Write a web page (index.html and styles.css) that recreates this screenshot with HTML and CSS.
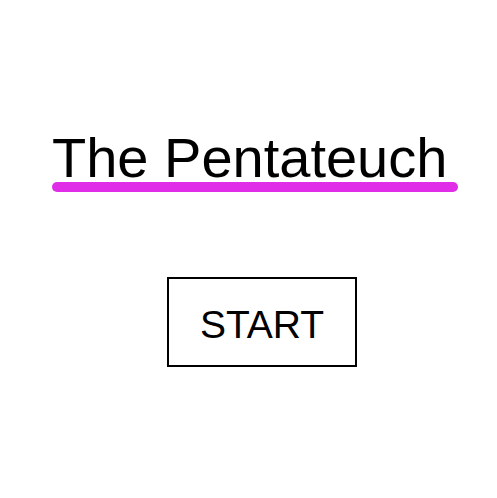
FILE: index.html
```html
<!DOCTYPE html>
<html>
<head>
<meta charset="utf-8">
<link rel="stylesheet" href="styles.css">
</head>
<body>
<main class="page">
  <div class="title-wrap">
    <h1 class="title">The Pentateuch</h1>
    <div class="bar"></div>
  </div>
  <button class="start">START</button>
</main>
</body>
</html>
```
FILE: styles.css
```css
html, body {
  margin: 0;
  padding: 0;
  background: #fff;
}
.page {
  width: 497px;
  height: 498px;
  display: flex;
  flex-direction: column;
  align-items: flex-start;
  font-family: "Liberation Sans", Arial, sans-serif;
}
.title-wrap {
  margin-top: 130px;
  margin-left: 52px;
  width: 406px;
  display: flex;
  flex-direction: column;
}
.title {
  margin: 0;
  font-weight: normal;
  font-size: 56px;
  line-height: 56px;
  color: #000;
}
.bar {
  margin-top: -4px;
  height: 10px;
  border-radius: 5px;
  background: #e02ee8;
}
.start {
  margin-top: 85px;
  margin-left: 167px;
  width: 190px;
  height: 90px;
  border: 2px solid #000;
  background: #fff;
  font-family: "Liberation Sans", Arial, sans-serif;
  font-size: 39px;
  color: #000;
  padding: 5px 0 0 0;
}
```
